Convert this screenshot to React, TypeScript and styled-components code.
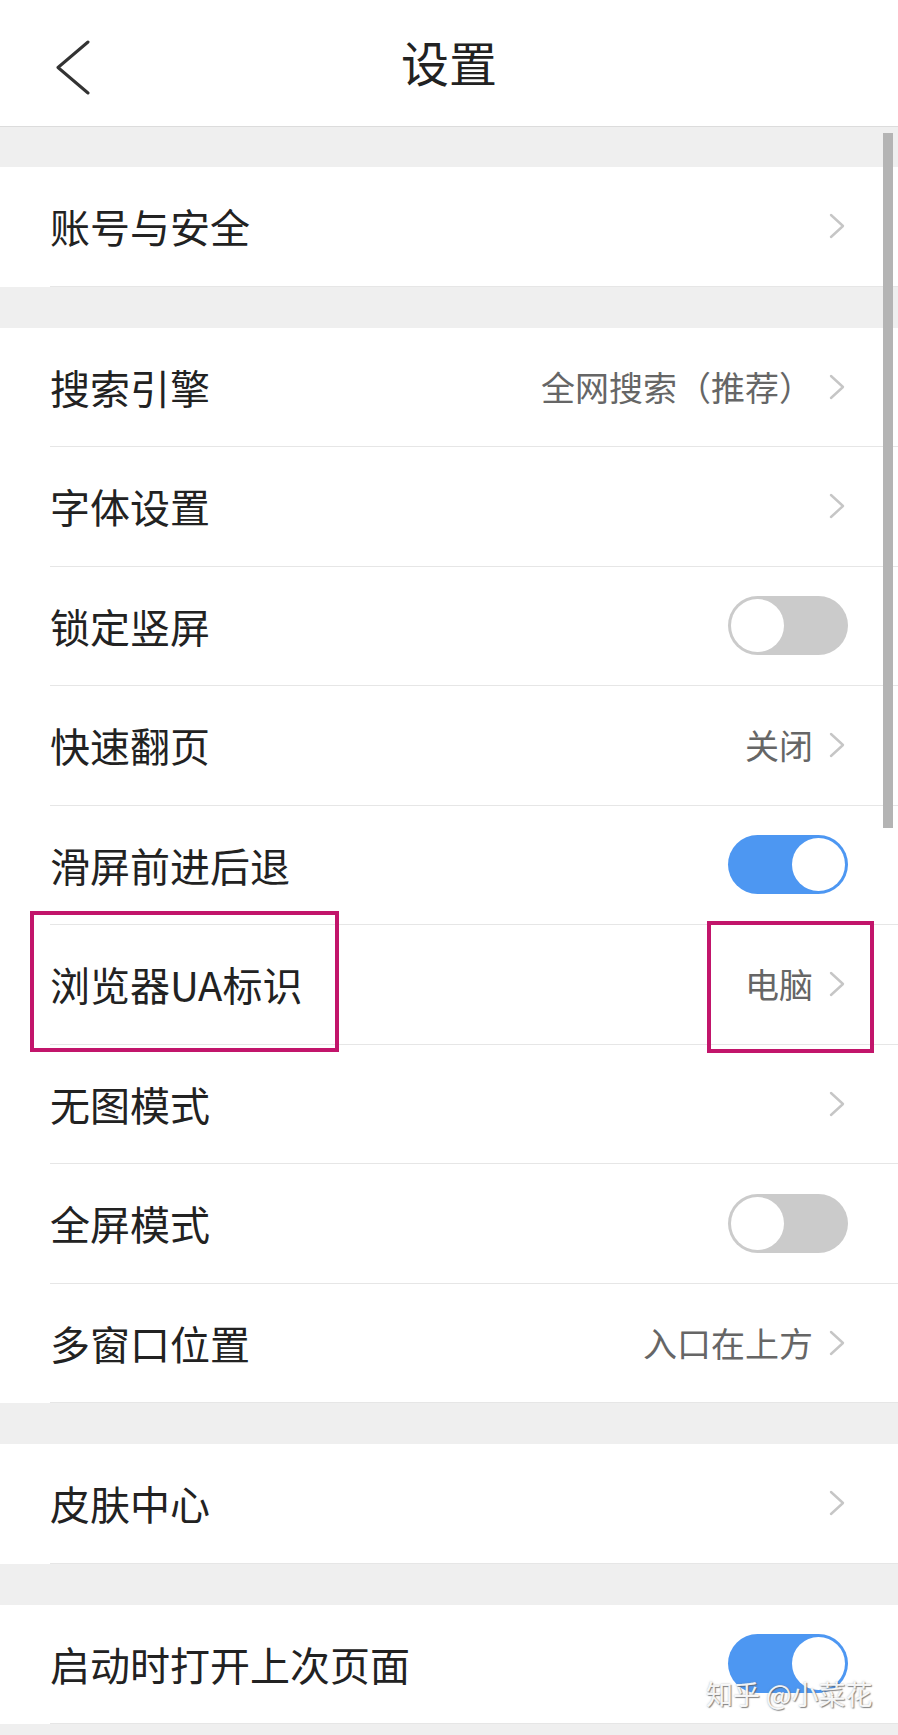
import styled, { createGlobalStyle } from 'styled-components';

const GlobalStyle = createGlobalStyle`
  html, body {
    margin: 0;
    padding: 0;
    background: #efefef;
  }
  body {
    font-family: "Noto Sans CJK SC", "Noto Sans", sans-serif;
    color: #222;
  }
`;

const Page = styled.div`
  position: relative;
  width: 898px;
  min-height: 1735px;
  background: #efefef;
  overflow: hidden;
`;

const Header = styled.header`
  height: 126px;
  background: #fff;
  border-bottom: 1px solid #dcdcdc;
  display: flex;
  align-items: center;
  justify-content: center;
  position: relative;
`;

const BackButton = styled.button`
  position: absolute;
  left: 50px;
  top: 38px;
  width: 44px;
  height: 60px;
  padding: 0;
  border: none;
  background: none;
  display: flex;
  align-items: center;
  justify-content: flex-start;
  cursor: pointer;
`;

const Title = styled.h1`
  margin: 0;
  font-size: 48px;
  font-weight: 400;
  color: #222;
  line-height: 1;
  padding-bottom: 4px;
`;

const Group = styled.section<{ $gap: number }>`
  margin-top: ${(p) => p.$gap}px;
  background: #fff;
`;

const Row = styled.div`
  height: 118.5px;
  margin-left: 50px;
  padding-right: 50px;
  border-bottom: 1px solid #e6e6e6;
  display: flex;
  align-items: center;
`;

const Label = styled.div`
  flex: 1;
  font-size: 40px;
  color: #222;
  line-height: 1;
`;

const Value = styled.span`
  font-size: 34px;
  color: #666;
  line-height: 1;
  margin-right: 14px;
`;

const ChevronWrap = styled.span`
  display: flex;
  width: 18px;
  justify-content: flex-end;
  margin-right: 3px;
`;

const Track = styled.div<{ $on: boolean }>`
  width: 120px;
  height: 59px;
  border-radius: 30px;
  background: ${(p) => (p.$on ? '#4d97f2' : '#cbcbcb')};
  display: flex;
  align-items: center;
  justify-content: ${(p) => (p.$on ? 'flex-end' : 'flex-start')};
  padding: 0 3px;
  box-sizing: border-box;
`;

const Knob = styled.div`
  width: 53px;
  height: 53px;
  border-radius: 50%;
  background: #fff;
`;

const ScrollBar = styled.div`
  position: absolute;
  left: 883px;
  top: 133px;
  width: 10px;
  height: 695px;
  background: #b4b4b4;
`;

const Highlight = styled.div`
  position: absolute;
  border: 4px solid #c2156b;
  box-sizing: border-box;
`;

const Watermark = styled.div`
  position: absolute;
  left: 706px;
  top: 1680px;
  font-size: 27px;
  line-height: 1;
  color: rgba(255, 255, 255, 0.92);
  text-shadow: 1px 1px 1px rgba(90, 90, 90, 0.7), 0 0 2px rgba(120, 120, 120, 0.5);
  white-space: nowrap;
`;

function Chevron() {
  return (
    <ChevronWrap>
      <svg width="16" height="26" viewBox="0 0 16 26" fill="none">
        <polyline points="2,2 14,13 2,24" stroke="#c6c6c6" strokeWidth="2.4" strokeLinecap="round" strokeLinejoin="round" />
      </svg>
    </ChevronWrap>
  );
}

function Toggle({ on }: { on: boolean }) {
  return (
    <Track $on={on}>
      <Knob />
    </Track>
  );
}

type Item = { label: string; value?: string; toggle?: boolean };

function SettingRow({ item }: { item: Item }) {
  return (
    <Row>
      <Label>{item.label}</Label>
      {item.toggle === undefined ? (
        <>
          {item.value && <Value>{item.value}</Value>}
          <Chevron />
        </>
      ) : (
        <Toggle on={item.toggle} />
      )}
    </Row>
  );
}

const groups: { gap: number; items: Item[] }[] = [
  { gap: 40, items: [{ label: '账号与安全' }] },
  {
    gap: 41,
    items: [
      { label: '搜索引擎', value: '全网搜索（推荐）' },
      { label: '字体设置' },
      { label: '锁定竖屏', toggle: false },
      { label: '快速翻页', value: '关闭' },
      { label: '滑屏前进后退', toggle: true },
      { label: '浏览器UA标识', value: '电脑' },
      { label: '无图模式' },
      { label: '全屏模式', toggle: false },
      { label: '多窗口位置', value: '入口在上方' },
    ],
  },
  { gap: 41, items: [{ label: '皮肤中心' }] },
  { gap: 41, items: [{ label: '启动时打开上次页面', toggle: true }] },
];

export default function App() {
  return (
    <>
      <GlobalStyle />
      <Page>
        <Header>
          <BackButton aria-label="返回">
            <svg width="40" height="60" viewBox="0 0 40 60" fill="none">
              <polyline points="38,4 8,29.5 38,55" stroke="#333" strokeWidth="3" strokeLinecap="round" strokeLinejoin="round" />
            </svg>
          </BackButton>
          <Title>设置</Title>
        </Header>

        {groups.map((g, i) => (
          <Group key={i} $gap={g.gap}>
            {g.items.map((it) => (
              <SettingRow key={it.label} item={it} />
            ))}
          </Group>
        ))}

        <ScrollBar />
        <Highlight style={{ left: 30, top: 911, width: 309, height: 141 }} />
        <Highlight style={{ left: 707, top: 921, width: 167, height: 132 }} />
        <Watermark>知乎 @小菜花</Watermark>
      </Page>
    </>
  );
}
